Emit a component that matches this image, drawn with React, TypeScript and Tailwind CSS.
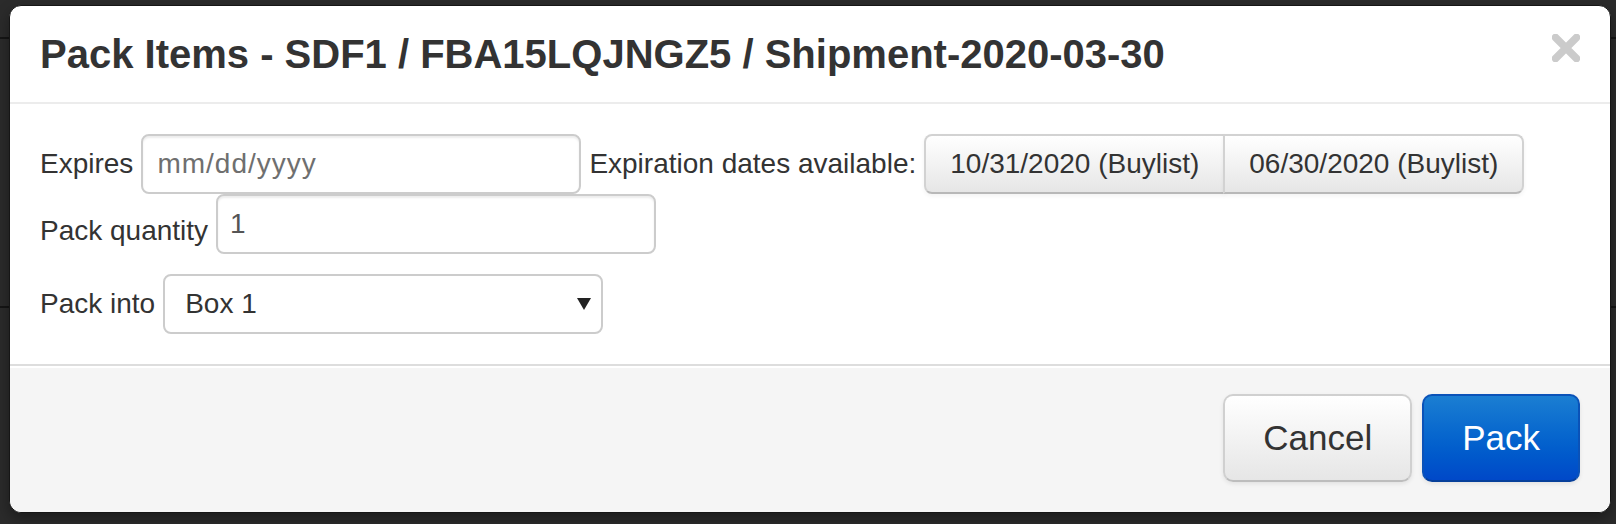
import React from "react";

function CloseIcon() {
  return (
    <svg width="28" height="28" viewBox="0 0 28 28" className="mt-[10px] shrink-0">
      <path d="M3.5 3.5 L24.5 24.5 M24.5 3.5 L3.5 24.5" stroke="#cbcbcb" strokeWidth="7.5" strokeLinecap="round" />
    </svg>
  );
}

export default function App() {
  return (
    <div className="relative h-[524px] w-[1616px] overflow-hidden bg-[#2b2b2b] font-['Liberation_Sans',Arial,sans-serif]">
      {/* page behind the backdrop */}
      <div className="absolute left-0 top-[37px] h-[2px] w-full bg-[#151515]" />
      <div className="absolute left-0 top-[306px] h-[2px] w-full bg-[#151515]" />

      {/* modal */}
      <div className="absolute left-[9px] top-[5px] w-[1602px] rounded-[12px] border border-[#161616] bg-white shadow-[0_6px_14px_rgba(0,0,0,0.35)]">
        <div className="flex items-start justify-between border-b-2 border-[#ececec] px-[30px] py-[18px]">
          <h3 className="text-[40px] font-bold leading-[60px] text-[#333]">
            Pack Items - SDF1 / FBA15LQJNGZ5 / Shipment-2020-03-30
          </h3>
          <CloseIcon />
        </div>

        <div className="px-[30px] pt-[30px] pb-[30px] text-[28px] leading-[40px] text-[#333]">
          <div className="flex items-baseline">
            <span>Expires</span>
            <input
              type="text"
              placeholder="mm/dd/yyyy"
              className="ml-[8px] h-[60px] w-[440px] rounded-[8px] border-2 border-[#cccccc] bg-white px-[14px] py-[8px] text-[28px] leading-[40px] tracking-[1px] text-[#555] shadow-[inset_0_2px_2px_rgba(0,0,0,0.075)] outline-none placeholder:text-[#6f6f6f]"
            />
            <span className="ml-[8px]">Expiration dates available:</span>
            <div className="ml-[8px] flex">
              <button className="h-[60px] rounded-l-[8px] border-2 border-[#d2d2d2] border-b-[#b8b8b8] bg-gradient-to-b from-white to-[#e6e6e6] px-[24px] text-[28px] leading-[40px] text-[#333] shadow-[0_2px_4px_rgba(0,0,0,0.05)]">
                10/31/2020 (Buylist)
              </button>
              <button className="-ml-[2px] h-[60px] rounded-r-[8px] border-2 border-[#d2d2d2] border-b-[#b8b8b8] bg-gradient-to-b from-white to-[#e6e6e6] px-[24px] text-[28px] leading-[40px] text-[#333] shadow-[0_2px_4px_rgba(0,0,0,0.05)]">
                06/30/2020 (Buylist)
              </button>
            </div>
          </div>

          <div className="flex items-start">
            <span className="pt-[17px]">Pack quantity</span>
            <input
              type="text"
              defaultValue="1"
              className="ml-[8px] h-[60px] w-[440px] rounded-[8px] border-2 border-[#cccccc] bg-white px-[12px] py-[8px] text-[28px] leading-[40px] text-[#555] shadow-[inset_0_2px_2px_rgba(0,0,0,0.075)] outline-none"
            />
          </div>

          <div className="mt-[20px] flex items-baseline">
            <span>Pack into</span>
            <div className="relative ml-[8px]">
              <select
                defaultValue="1"
                className="h-[60px] w-[440px] appearance-none rounded-[8px] border-2 border-[#cccccc] bg-white px-[20px] text-[28px] leading-[40px] text-[#333] outline-none"
              >
                <option value="1">Box 1</option>
              </select>
              <svg
                width="14"
                height="12"
                viewBox="0 0 14 12"
                className="pointer-events-none absolute right-[12px] top-[24px]"
              >
                <path d="M0 0 H14 L7 12 Z" fill="#222" />
              </svg>
            </div>
          </div>
        </div>

        <div className="flex justify-end gap-[10px] rounded-b-[12px] border-t-2 border-[#dddddd] bg-[#f5f5f5] px-[30px] pt-[28px] pb-[30px] shadow-[inset_0_2px_0_#fff]">
          <button className="h-[88px] rounded-[10px] border-2 border-[#d0d0d0] border-b-[#bdbdbd] bg-gradient-to-b from-white to-[#e6e6e6] px-[38px] text-[35px] leading-[40px] text-[#333] shadow-[0_2px_4px_rgba(0,0,0,0.08)]">
            Cancel
          </button>
          <button className="h-[88px] rounded-[10px] border-2 border-[#0a52b8] border-b-[#063f9a] bg-gradient-to-b from-[#1b7ed2] to-[#0048c8] px-[38px] text-[35px] leading-[40px] text-white shadow-[0_2px_4px_rgba(0,0,0,0.08)]">
            Pack
          </button>
        </div>
      </div>
    </div>
  );
}
